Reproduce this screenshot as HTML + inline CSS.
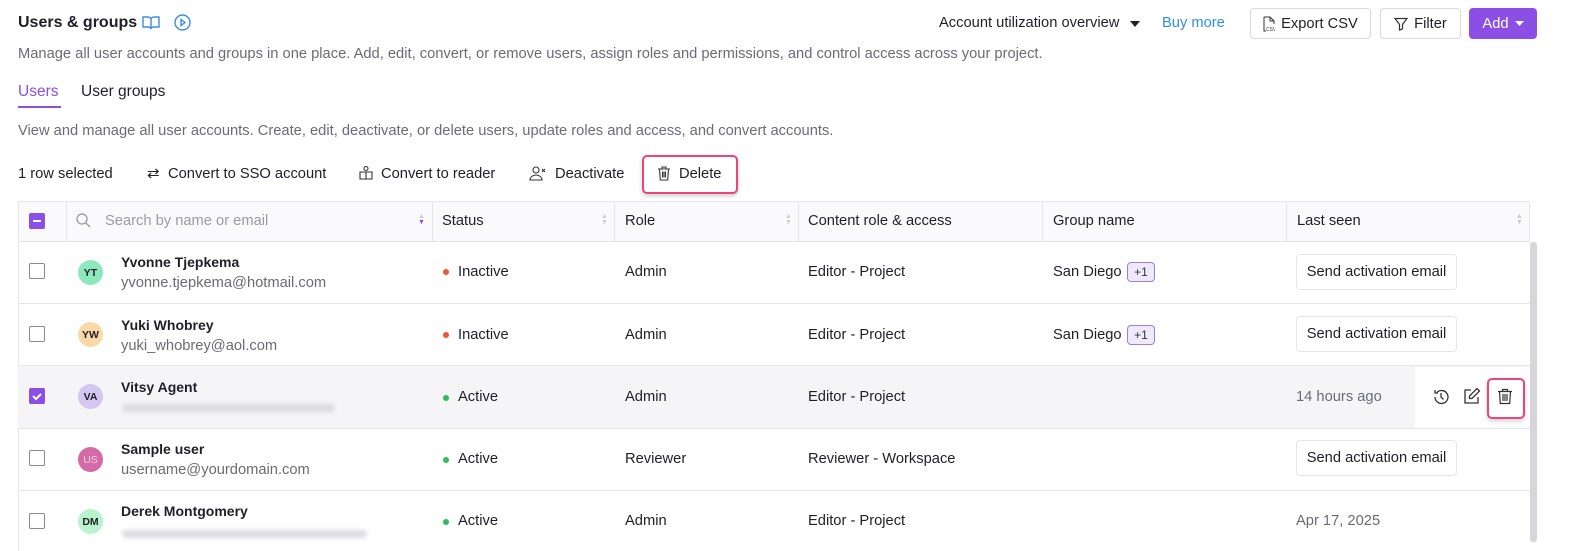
<!DOCTYPE html><html><head><style>
*{box-sizing:border-box;margin:0;padding:0}
body{width:1584px;height:551px;overflow:hidden;background:#fff;font-family:"Liberation Sans",sans-serif;color:#1f1f29;font-size:14.7px;position:relative}
.a{position:absolute;white-space:nowrap}
.g{color:#6b6b76}
.btn{position:absolute;border:1px solid #d9d9de;border-radius:4px;background:#fff;height:31px;display:flex;align-items:center;justify-content:center;gap:6px;font-size:14.7px}
.cb{position:absolute;width:16px;height:16px;border:1.5px solid #8a8a93;border-radius:2px;background:#fff}
.av{position:absolute;width:25px;height:25px;border-radius:50%;font-size:10.5px;font-weight:bold;display:flex;align-items:center;justify-content:center}
.dot{position:absolute;width:6px;height:6px;border-radius:50%}
.row{position:absolute;left:18px;width:1512px;border-bottom:1px solid #e6e6ea}
.sae{position:absolute;left:1296px;width:161px;height:36px;border:1px solid #e6e6ea;border-radius:4px;background:#fff;font-size:14.7px;display:flex;align-items:center;justify-content:center}
.tag{position:absolute;left:1127px;width:28px;height:20px;border:1px solid #9b7de8;background:#efe9fd;border-radius:4px;font-size:12px;display:flex;align-items:center;justify-content:center;color:#333}
.vl{position:absolute;top:201px;width:1px;height:40px;background:#e6e6ea}
.b{font-weight:bold;font-size:14px}
</style></head><body>
<div class="a" style="left:18px;top:14px;font-size:16px;font-weight:bold">Users &amp; groups</div>
<svg class="a" style="left:142px;top:15px" width="18" height="16" viewBox="0 0 18 16" fill="none" stroke="#3b8de0" stroke-width="1.4"><path d="M1 2h5c1.5 0 3 1 3 2.5V14c0-1-1-2-2.5-2H1zM17 2h-5c-1.5 0-3 1-3 2.5V14c0-1 1-2 2.5-2H17z"/></svg>
<svg class="a" style="left:174px;top:14px" width="17" height="17" viewBox="0 0 17 17" fill="none" stroke="#3b8de0" stroke-width="1.4"><circle cx="8.5" cy="8.5" r="7.5"/><path d="M7 5.5v6l4-3z"/></svg>
<div class="a" style="left:939px;top:15px">Account utilization overview</div>
<svg class="a" style="left:1130px;top:21px" width="10" height="6"><path d="M0 0h10L5 6z" fill="#222"/></svg>
<div class="a" style="left:1162px;top:15px;color:#2f8fe8">Buy more</div>
<div class="btn" style="left:1250px;top:8px;width:121px"><svg width="12" height="16" viewBox="0 0 12 16" fill="none" stroke="#333" stroke-width="1"><path d="M1 1h6l4 4v3M1 1v14h2M7 1v4h4"/><text x="3" y="15" font-size="5" fill="#333" stroke="none">CSV</text></svg>Export CSV</div>
<div class="btn" style="left:1380px;top:8px;width:81px"><svg width="14" height="14" viewBox="0 0 14 14" fill="none" stroke="#333" stroke-width="1.2"><path d="M1 1.5h12L8.5 7.5V12L5.5 13V7.5z"/></svg>Filter</div>
<div class="btn" style="left:1469px;top:8px;width:68px;background:#8b4fe6;border-color:#8b4fe6;color:#fff">Add <svg width="9" height="5"><path d="M0 0h9L4.5 5z" fill="#fff"/></svg></div>
<div class="a g" style="left:18px;top:46px">Manage all user accounts and groups in one place. Add, edit, convert, or remove users, assign roles and permissions, and control access across your project.</div>
<div class="a" style="left:18px;top:83px;font-size:15.5px;color:#8b4fe6">Users</div>
<div style="position:absolute;left:18px;top:106px;width:43px;height:2px;background:#8b4fe6"></div>
<div class="a" style="left:81px;top:83px;font-size:15.5px">User groups</div>
<div class="a g" style="left:18px;top:123px">View and manage all user accounts. Create, edit, deactivate, or delete users, update roles and access, and convert accounts.</div>
<div class="a" style="left:18px;top:166px">1 row selected</div>
<div class="a" style="left:147px;top:164px;font-size:15px">⇄</div><div class="a" style="left:168px;top:166px">Convert to SSO account</div>
<svg class="a" style="left:358px;top:165px" width="16" height="16" viewBox="0 0 16 16" fill="none" stroke="#333" stroke-width="1.1"><circle cx="8" cy="3.5" r="2"/><path d="M2 7h12v7H2zM8 7v7"/></svg><div class="a" style="left:381px;top:166px">Convert to reader</div>
<svg class="a" style="left:529px;top:165px" width="18" height="16" viewBox="0 0 18 16" fill="none" stroke="#333" stroke-width="1.1"><circle cx="7" cy="5" r="3"/><path d="M1 15c0-3 3-5 6-5s6 2 6 5zM13 4l3 3M16 4l-3 3"/></svg><div class="a" style="left:555px;top:166px">Deactivate</div>
<div style="position:absolute;left:642px;top:155px;width:96px;height:39px;border:2.5px solid #e8467c;border-radius:5px;box-shadow:0 2px 4px rgba(0,0,0,.2)"></div>
<svg class="a" style="left:657px;top:166px" width="14" height="15" viewBox="0 0 14 15" fill="none" stroke="#333" stroke-width="1.1"><path d="M1 3h12M5 3V1h4v2M2.5 3l.8 11h7.4l.8-11M5.5 5.5v6M7 5.5v6M8.5 5.5v6"/></svg><div class="a" style="left:679px;top:166px">Delete</div>
<div style="position:absolute;left:18px;top:201px;width:1512px;height:41px;background:#fafafc;border:1px solid #e6e6ea"></div>
<div class="vl" style="left:66px"></div><div class="vl" style="left:432px"></div><div class="vl" style="left:614px"></div><div class="vl" style="left:798px"></div><div class="vl" style="left:1042px"></div><div class="vl" style="left:1286px"></div>
<div style="position:absolute;left:29px;top:213px;width:16px;height:16px;background:#8b4fe6;border-radius:2px"><div style="position:absolute;left:4px;top:7px;width:8px;height:2px;background:#fff"></div></div>
<svg class="a" style="left:76px;top:213px" width="15" height="15" fill="none" stroke="#999" stroke-width="1.3"><circle cx="6" cy="6" r="5"/><path d="M10 10l4 4"/></svg>
<div class="a" style="left:105px;top:213px;color:#9b9ba3">Search by name or email</div>
<div class="a" style="left:418px;top:214px;font-size:7px;line-height:6px;color:#8b4fe6"><span style="color:#ccc">▲</span><br>▼</div>
<div class="a" style="left:442px;top:213px">Status</div><div class="a" style="left:601px;top:214px;font-size:7px;line-height:6px;color:#ccc">▲<br>▼</div>
<div class="a" style="left:625px;top:213px">Role</div><div class="a" style="left:785px;top:214px;font-size:7px;line-height:6px;color:#ccc">▲<br>▼</div>
<div class="a" style="left:808px;top:213px">Content role &amp; access</div>
<div class="a" style="left:1053px;top:213px">Group name</div>
<div class="a" style="left:1297px;top:213px">Last seen</div><div class="a" style="left:1516px;top:214px;font-size:7px;line-height:6px;color:#ccc">▲<br>▼</div>
<div style="position:absolute;left:18px;top:242px;width:1px;height:309px;background:#e6e6ea"></div>
<div style="position:absolute;left:1530px;top:242px;width:7px;height:300px;background:#d6d6da;border-radius:3px"></div>
<div class="row" style="top:242px;height:62px"></div>
<div class="row" style="top:304px;height:62px"></div>
<div class="row" style="top:366px;height:63px;background:#f5f5f8"></div>
<div class="row" style="top:429px;height:62px"></div>
<div style="position:absolute;left:1415px;top:367px;width:115px;height:61px;background:#fff"></div>

<div class="cb" style="left:29px;top:263px"></div>
<div class="av" style="left:78px;top:260px;background:#8ee8bd">YT</div>
<div class="a b" style="left:121px;top:254px">Yvonne Tjepkema</div>
<div class="a g" style="left:121px;top:275px">yvonne.tjepkema@hotmail.com</div>
<div class="dot" style="left:443px;top:269px;background:#f0552d"></div><div class="a" style="left:458px;top:264px">Inactive</div>
<div class="a" style="left:625px;top:264px">Admin</div><div class="a" style="left:808px;top:264px">Editor - Project</div>
<div class="a" style="left:1053px;top:264px">San Diego</div><div class="tag" style="top:262px">+1</div>
<div class="sae" style="top:254px">Send activation email</div>

<div class="cb" style="left:29px;top:326px"></div>
<div class="av" style="left:78px;top:322px;background:#fbd8a8">YW</div>
<div class="a b" style="left:121px;top:317px">Yuki Whobrey</div>
<div class="a g" style="left:121px;top:338px">yuki_whobrey@aol.com</div>
<div class="dot" style="left:443px;top:332px;background:#f0552d"></div><div class="a" style="left:458px;top:327px">Inactive</div>
<div class="a" style="left:625px;top:327px">Admin</div><div class="a" style="left:808px;top:327px">Editor - Project</div>
<div class="a" style="left:1053px;top:327px">San Diego</div><div class="tag" style="top:325px">+1</div>
<div class="sae" style="top:316px">Send activation email</div>

<div style="position:absolute;left:29px;top:388px;width:16px;height:16px;background:#8b4fe6;border-radius:2px"><svg width="16" height="16"><path d="M4 8l3 3 5-5" stroke="#fff" stroke-width="2" fill="none"/></svg></div>
<div class="av" style="left:78px;top:384px;background:#d4c6f2">VA</div>
<div class="a b" style="left:121px;top:379px">Vitsy Agent</div>
<div style="position:absolute;left:122px;top:404px;width:213px;height:8px;background:#dcdce0;border-radius:4px;filter:blur(2px)"></div>
<div class="dot" style="left:443px;top:395px;background:#2dbd5a"></div><div class="a" style="left:458px;top:389px">Active</div>
<div class="a" style="left:625px;top:389px">Admin</div><div class="a" style="left:808px;top:389px">Editor - Project</div>
<div class="a g" style="left:1296px;top:389px">14 hours ago</div>
<svg class="a" style="left:1432px;top:388px" width="18" height="18" viewBox="0 0 18 18" fill="none" stroke="#333" stroke-width="1.3"><path d="M3 9a6.5 6.5 0 1 0 2-4.7M3 2v3h3M9 5v4l2.5 2.5"/></svg>
<svg class="a" style="left:1463px;top:387px" width="18" height="18" viewBox="0 0 18 18" fill="none" stroke="#333" stroke-width="1.3"><path d="M8 3H2v13h13v-6M14 1.5l2.5 2.5L9 11.5H6.5V9z"/></svg>
<div style="position:absolute;left:1487px;top:378px;width:38px;height:41px;border:2.5px solid #e8467c;border-radius:5px;box-shadow:0 2px 4px rgba(0,0,0,.2)"></div>
<svg class="a" style="left:1497px;top:388px" width="16" height="17" viewBox="0 0 16 17" fill="none" stroke="#333" stroke-width="1.2"><path d="M1 3.5h14M5.5 3.5V1.5h5v2M2.5 3.5l.8 12h9.4l.8-12M6 6v7M8 6v7M10 6v7"/></svg>

<div class="cb" style="left:29px;top:450px"></div>
<div class="av" style="left:78px;top:447px;background:#d46aa6;color:#f6d0e4;font-weight:normal">US</div>
<div class="a b" style="left:121px;top:441px">Sample user</div>
<div class="a g" style="left:121px;top:462px">username@yourdomain.com</div>
<div class="dot" style="left:443px;top:457px;background:#2dbd5a"></div><div class="a" style="left:458px;top:451px">Active</div>
<div class="a" style="left:625px;top:451px">Reviewer</div><div class="a" style="left:808px;top:451px">Reviewer - Workspace</div>
<div class="sae" style="top:440px">Send activation email</div>

<div class="cb" style="left:29px;top:513px"></div>
<div class="av" style="left:78px;top:509px;background:#b9f2cd">DM</div>
<div class="a b" style="left:121px;top:503px">Derek Montgomery</div>
<div style="position:absolute;left:122px;top:530px;width:245px;height:8px;background:#dcdce0;border-radius:4px;filter:blur(2px)"></div>
<div class="dot" style="left:443px;top:519px;background:#2dbd5a"></div><div class="a" style="left:458px;top:513px">Active</div>
<div class="a" style="left:625px;top:513px">Admin</div><div class="a" style="left:808px;top:513px">Editor - Project</div>
<div class="a g" style="left:1296px;top:513px">Apr 17, 2025</div>
</body></html>
